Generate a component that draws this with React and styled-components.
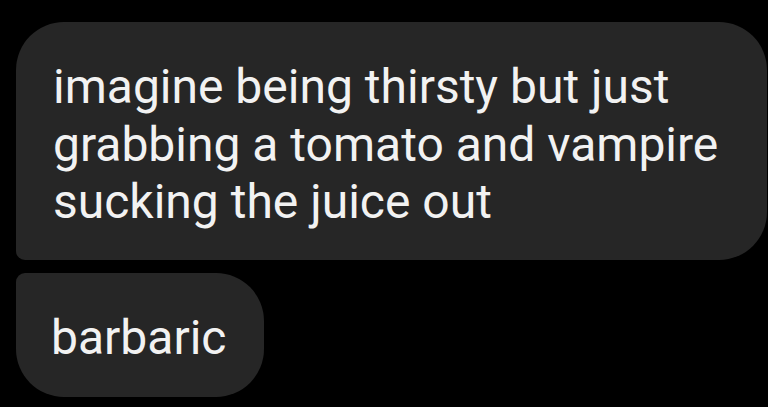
import styled, { createGlobalStyle } from "styled-components";

const GlobalStyle = createGlobalStyle`
  html, body {
    margin: 0;
    padding: 0;
    background: #000;
  }
  body {
    font-family: Roboto, "Noto Sans", sans-serif;
  }
`;

const Thread = styled.div`
  display: flex;
  flex-direction: column;
  align-items: flex-start;
  gap: 13px;
  padding: 22px 1px 0 16px;
  height: 407px;
  box-sizing: border-box;
  overflow: hidden;
`;

const Bubble = styled.div`
  box-sizing: border-box;
  background: #262626;
  color: #f2f2f2;
  font-size: 48px;
  line-height: 57.5px;
  white-space: nowrap;
  padding: ${(p) => (p.$first ? "36px 36px 29px 37px" : "36px 38px 31px 35px")};
  width: ${(p) => (p.$full ? "100%" : "auto")};
  border-radius: ${(p) =>
    p.$first ? "48px 48px 48px 9px" : "9px 48px 48px 48px"};
`;

export default function App() {
  return (
    <>
      <GlobalStyle />
      <Thread>
        <Bubble $first $full>
          imagine being thirsty but just
          <br />
          grabbing a tomato and vampire
          <br />
          sucking the juice out
        </Bubble>
        <Bubble>barbaric</Bubble>
      </Thread>
    </>
  );
}
